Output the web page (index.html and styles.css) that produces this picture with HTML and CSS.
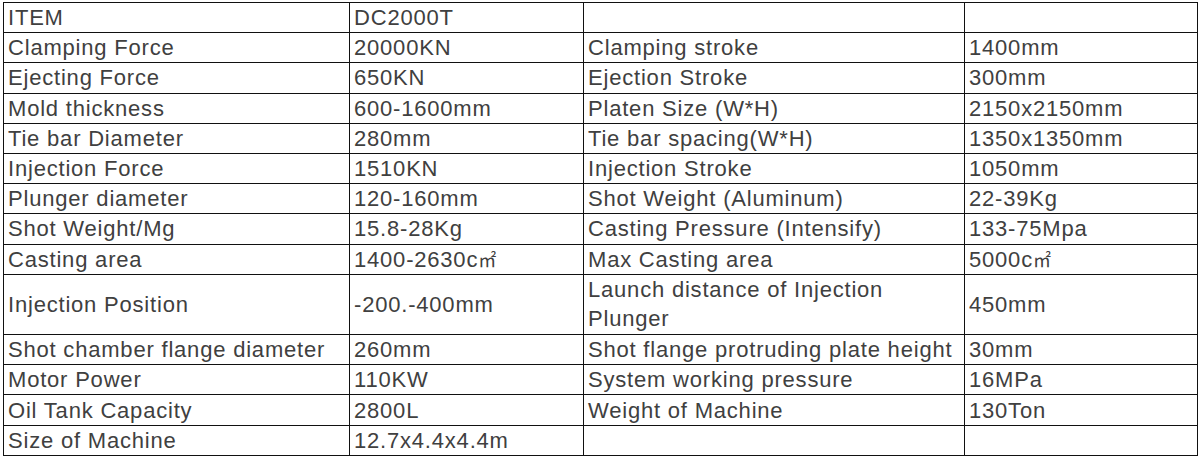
FILE: index.html
```html
<!DOCTYPE html>
<html>
<head>
<meta charset="utf-8">
<link rel="stylesheet" href="styles.css">
</head>
<body>
<table class="spec">
  <colgroup>
    <col class="c1"><col class="c2"><col class="c3"><col class="c4">
  </colgroup>
  <tr><td>ITEM</td><td>DC2000T</td><td></td><td></td></tr>
  <tr><td>Clamping Force</td><td>20000KN</td><td>Clamping stroke</td><td>1400mm</td></tr>
  <tr><td>Ejecting Force</td><td>650KN</td><td>Ejection Stroke</td><td>300mm</td></tr>
  <tr><td>Mold thickness</td><td>600-1600mm</td><td>Platen Size (W*H)</td><td>2150x2150mm</td></tr>
  <tr><td>Tie bar Diameter</td><td>280mm</td><td>Tie bar spacing(W*H)</td><td>1350x1350mm</td></tr>
  <tr><td>Injection Force</td><td>1510KN</td><td>Injection Stroke</td><td>1050mm</td></tr>
  <tr><td>Plunger diameter</td><td>120-160mm</td><td>Shot Weight (Aluminum)</td><td>22-39Kg</td></tr>
  <tr><td>Shot Weight/Mg</td><td>15.8-28Kg</td><td>Casting Pressure (Intensify)</td><td>133-75Mpa</td></tr>
  <tr><td>Casting area</td><td>1400-2630c<span class="sq">㎡</span></td><td>Max Casting area</td><td>5000c<span class="sq">㎡</span></td></tr>
  <tr class="tall"><td>Injection Position</td><td>-200.-400mm</td><td>Launch distance of Injection<br>Plunger</td><td>450mm</td></tr>
  <tr><td>Shot chamber flange diameter</td><td>260mm</td><td>Shot flange protruding plate height</td><td>30mm</td></tr>
  <tr><td>Motor Power</td><td>110KW</td><td>System working pressure</td><td>16MPa</td></tr>
  <tr><td>Oil Tank Capacity</td><td>2800L</td><td>Weight of Machine</td><td>130Ton</td></tr>
  <tr><td>Size of Machine</td><td>12.7x4.4x4.4m</td><td></td><td></td></tr>
</table>
</body>
</html>
```
FILE: styles.css
```css
html, body {
  margin: 0;
  padding: 0;
  background: #fff;
}
body {
  padding: 2px 0 0 3px;
}
.spec {
  border-collapse: collapse;
  table-layout: fixed;
  width: 1194px;
  font-family: "Liberation Sans", Arial, "Noto Sans CJK SC", sans-serif;
  font-size: 22px;
  letter-spacing: 0.8px;
  color: #404040;
}
.c1 { width: 346px; }
.c2 { width: 234px; }
.c3 { width: 381px; }
.c4 { width: 233px; }
.spec tr { height: 30.2px; }
.spec tr.tall { height: 60.4px; }
.spec td {
  border: 1px solid #111;
  padding: 0 0 0 4px;
  vertical-align: middle;
  white-space: nowrap;
  line-height: 29px;
}
.sq {
  font-family: "Noto Sans CJK SC", sans-serif;
  font-size: 18px;
  letter-spacing: 0;
}
```
